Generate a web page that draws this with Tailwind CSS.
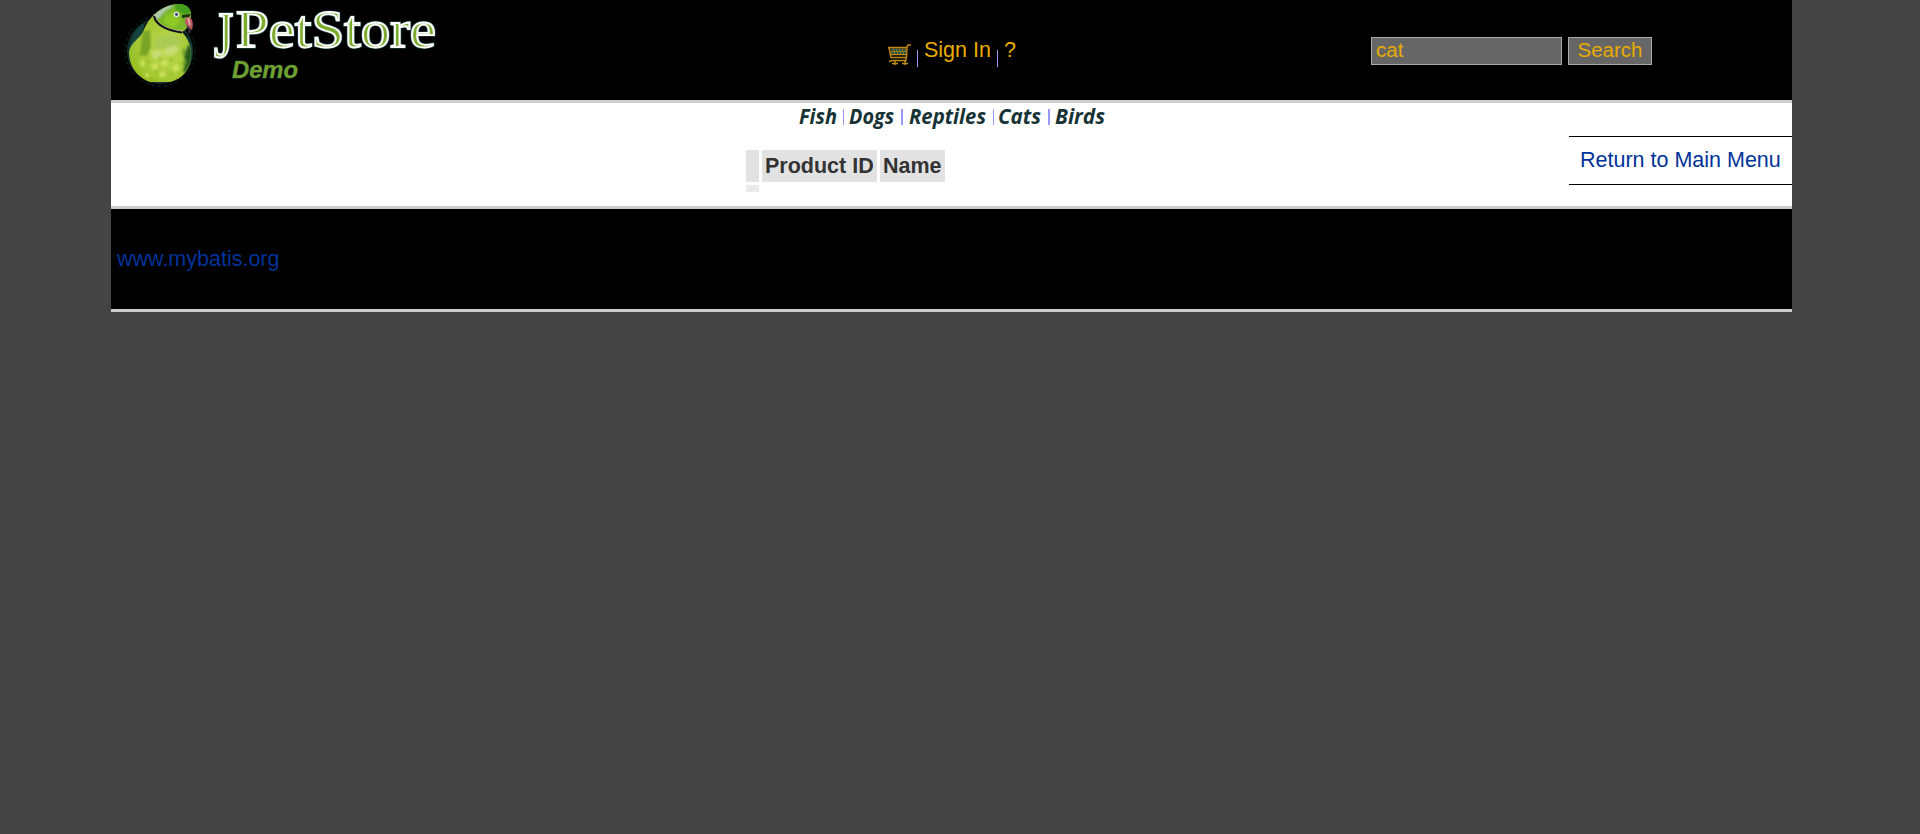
<!DOCTYPE html>
<html lang="en">
<head>
<meta charset="utf-8">
<title>JPetStore Demo</title>
<script src="https://cdn.jsdelivr.net/npm/@tailwindcss/browser@4"></script>
</head>
<body class="min-h-screen bg-[#444] font-['Liberation_Sans',Arial,sans-serif] text-[21.5px] leading-[26px] text-[#333]">
<div class="ml-[111px] w-[1681px]">
  <header class="flex h-[103px] items-start border-b-[3px] border-[#ccc] bg-black text-[#eaac00]">
    <a href="#" class="block w-[777px]" aria-label="JPetStore Demo">
      <svg class="block" width="340" height="100" viewBox="0 0 340 100">
        <defs>
          <radialGradient id="body" cx=".55" cy=".55" r=".5"><stop offset="0" stop-color="#c3da58"/><stop offset=".6" stop-color="#a8cb35"/><stop offset="1" stop-color="#8fba2a"/></radialGradient>
          <filter id="soft"><feGaussianBlur stdDeviation=".8"/></filter>
          <clipPath id="bird"><path d="M44 14C50 8 60 4 68 4C76 4 81 9 80 17C79 25 75 30 71 32C77 38 81 48 80 57C79 69 72 79 59 82H40C27 78 18 66 18 52C19 43 29 38 32 32C34 26 38 19 44 14Z"/></clipPath>
        </defs>
        <circle cx="49" cy="51" r="32" fill="#020a08" stroke="#12302e" stroke-width="2"/>
        <circle cx="49" cy="51" r="35" fill="none" stroke="#0f302d" stroke-width="1" stroke-dasharray="3 3"/>
        <path d="M18 49C20 34 28 25 34 23L31 36C27 40 22 44 18 54ZM71 32C79 38 83 47 81 57L77 61Z" fill="#16423d"/>
        <g clip-path="url(#bird)">
          <path d="M10 0H90V90H10Z" fill="url(#body)"/>
          <g filter="url(#soft)">
            <path d="M32 32L39 30L40 46L36 56L29 55L30 44Z" fill="#78a526"/>
            <path d="M46 38L64 33L72 44L61 48L48 49L42 46Z" fill="#aacb56"/>
            <path d="M55 48l9-3 4 5-8 6-6-2zM40 52l8-2 4 5-9 4z" fill="#c9dd76"/>
            <path d="M16 58L25 61L31 73L44 79L50 86H26L14 72Z" fill="#9cc021"/>
            <path d="M30 60l4 2-1 5-4-2zM40 65l6-2 1 5-5 2zM52 60l6 2-3 5-5-2zM61 67l5-3 3 4-5 5zM48 73l5-2 2 5-6 1zM34 73l4 1v4l-4-2z" fill="#cce15c"/>
            <path d="M35 59l4 1-1 4zM47 57l4 1-2 4zM58 57l4 2-2 4zM44 70l4 2-3 3zM57 73l5-1-2 5zM26 53l4 2-3 4z" fill="#98bd2b"/>
            <path d="M77 45l4 2v15l-7 11-2-2 3-9-2-5z" fill="#255d1e"/>
            <path d="M72 47l3 5-4 4zM71 62l4-2-2 7z" fill="#659d2d"/>
            <path d="M44 10L55 3L70 1L83 7L82 23L74 30L66 31L52 26L42 18Z" fill="#79b62b"/>
            <path d="M45 12L57 5L63 5L53 12L48 18L42 18Z" fill="#b3cbb0"/>
            <path d="M55 15l8-3 7 9-7 7-11-5z" fill="#8fc928"/>
            <path d="M63 3l14 0 5 10-8 2-9-5z" fill="#449e1d"/>
          </g>
        </g>
        <path d="M43 14C44 24 57 31 72 31" fill="none" stroke="#c4ad9c" stroke-width="1.2"/>
        <path d="M43 16C45 26 58 31 71 32.500" fill="none" stroke="#100d1d" stroke-width="2"/>
        <circle cx="65.500" cy="14.500" r="2.800" fill="#dbe8d8"/><circle cx="65.500" cy="14.500" r="1.400" fill="#37386b"/>
        <path d="M71 15l9-1-2 3-7 1z" fill="#17370b"/>
        <path d="M76 17C81 16 83 22 81 30C77 27 73 24 74 20Z" fill="#b95a62"/><path d="M77 18L79 25" stroke="#edb4af" stroke-width="1.500"/>
        <path d="M76 26L79 30L78 33" fill="none" stroke="#493443" stroke-width="1.500"/>
        <g font-family="Liberation Serif,Times New Roman,serif" font-size="52">
          <g fill="#fff" stroke="#24504e" stroke-width="3" paint-order="stroke">
            <text transform="translate(103 57) scale(.95 1.240)">J</text>
            <text x="125" y="46.500" textLength="200" lengthAdjust="spacingAndGlyphs">PetStore</text>
          </g>
          <g fill="#7cac2d" stroke="#fff" stroke-width="1.800">
            <text transform="translate(103 57) scale(.95 1.240)">J</text>
            <text x="125" y="46.500" textLength="200" lengthAdjust="spacingAndGlyphs">PetStore</text>
          </g>
        </g>
        <text x="121" y="78" textLength="66" lengthAdjust="spacingAndGlyphs" font-family="Liberation Sans,Arial,sans-serif" font-weight="700" font-style="italic" font-size="23.500" fill="#71a02f" stroke="#173d2c" stroke-width="1" paint-order="stroke">Demo</text>
      </svg>
    </a>
    <nav class="flex w-[483px] pt-[37px]">
      <a href="#" aria-label="Cart" class="mt-[6px] block">
        <svg class="block" width="23" height="23" viewBox="0 0 23 23" fill="none" stroke="#bd8a16" stroke-width="1.500"><path d="M0 4.500H19L20 2H23M1 4.500L3 14.500H18.500L19 4.500M2.500 11.500H19M18 14.500V17.500H4L1 18.500M7 18V22M17 18V22M4 20.500H10M14 20.500H20"/><path d="M2.500 5.500H18.500V11H3.500Z" fill="#9a7019" stroke="none"/><path d="M3 7H18M4 10H18" stroke="#14584f" stroke-width="2" stroke-dasharray="2 1"/></svg>
      </a>
      <span class="mt-[13px] ml-[6px] h-[17px] w-px bg-[#9999ff]"></span>
      <a href="#" class="ml-[6px] w-[73px] whitespace-nowrap">Sign In</a>
      <span class="mt-[13px] h-[17px] w-px bg-[#9999ff]"></span>
      <a href="#" class="ml-[6px]">?</a>
    </nav>
    <form class="flex gap-[6px] pt-[37px] text-[20.5px]">
      <input type="text" value="cat" class="h-[28px] w-[191px] border border-[#aaa] bg-[#666] px-[4px] pb-[2px]">
      <button type="button" class="h-[28px] w-[84px] border border-[#aaa] bg-[#666] pb-[2px] leading-[24px]">Search</button>
    </form>
  </header>
  <main class="h-[106px] border-b-[3px] border-[#ccc] bg-white">
    <nav class="pl-[679px]">
      <svg class="block" width="330" height="32" viewBox="790 103 330 32" font-family="Open Sans,Noto Sans,sans-serif" font-style="italic" font-weight="700" font-size="20.500" fill="#173335">
        <text x="799" y="124" textLength="38" lengthAdjust="spacingAndGlyphs">Fish</text>
        <text x="849" y="124" textLength="45" lengthAdjust="spacingAndGlyphs">Dogs</text>
        <text x="909" y="124" textLength="77" lengthAdjust="spacingAndGlyphs">Reptiles</text>
        <text x="998" y="124" textLength="43" lengthAdjust="spacingAndGlyphs">Cats</text>
        <text x="1055" y="124" textLength="50" lengthAdjust="spacingAndGlyphs">Birds</text>
        <path d="M843 109h1v16h-1zM901 109h2v16h-2zM993 109h1v16h-1zM1048 109h2v16h-2z" fill="#9999ff"/>
      </svg>
    </nav>
    <div class="flex items-start justify-between pl-[635px]">
      <table class="mt-[15px] border-separate border-spacing-0">
        <tbody class="grid grid-cols-[13px_115px_65px] gap-[3px]">
          <tr class="contents"><th class="h-[32px] bg-[#e2e2e2]"></th><th class="bg-[#e2e2e2] px-[3px] py-[3px] text-left whitespace-nowrap">Product ID</th><th class="bg-[#e2e2e2] px-[3px] py-[3px] text-left">Name</th></tr>
          <tr class="contents"><td class="h-[7px] bg-[#eaeaea]"></td></tr>
        </tbody>
      </table>
      <a href="#" class="mt-px h-[49px] w-[223px] border-y border-black pt-[10px] pl-[11px] whitespace-nowrap text-[#039]">Return to Main Menu</a>
    </div>
  </main>
  <footer class="h-[103px] border-b-[3px] border-[#ccc] bg-black pt-[37px] pl-[6px]"><a href="#" class="text-[#039]">www.mybatis.org</a></footer>
</div>
</body>
</html>
